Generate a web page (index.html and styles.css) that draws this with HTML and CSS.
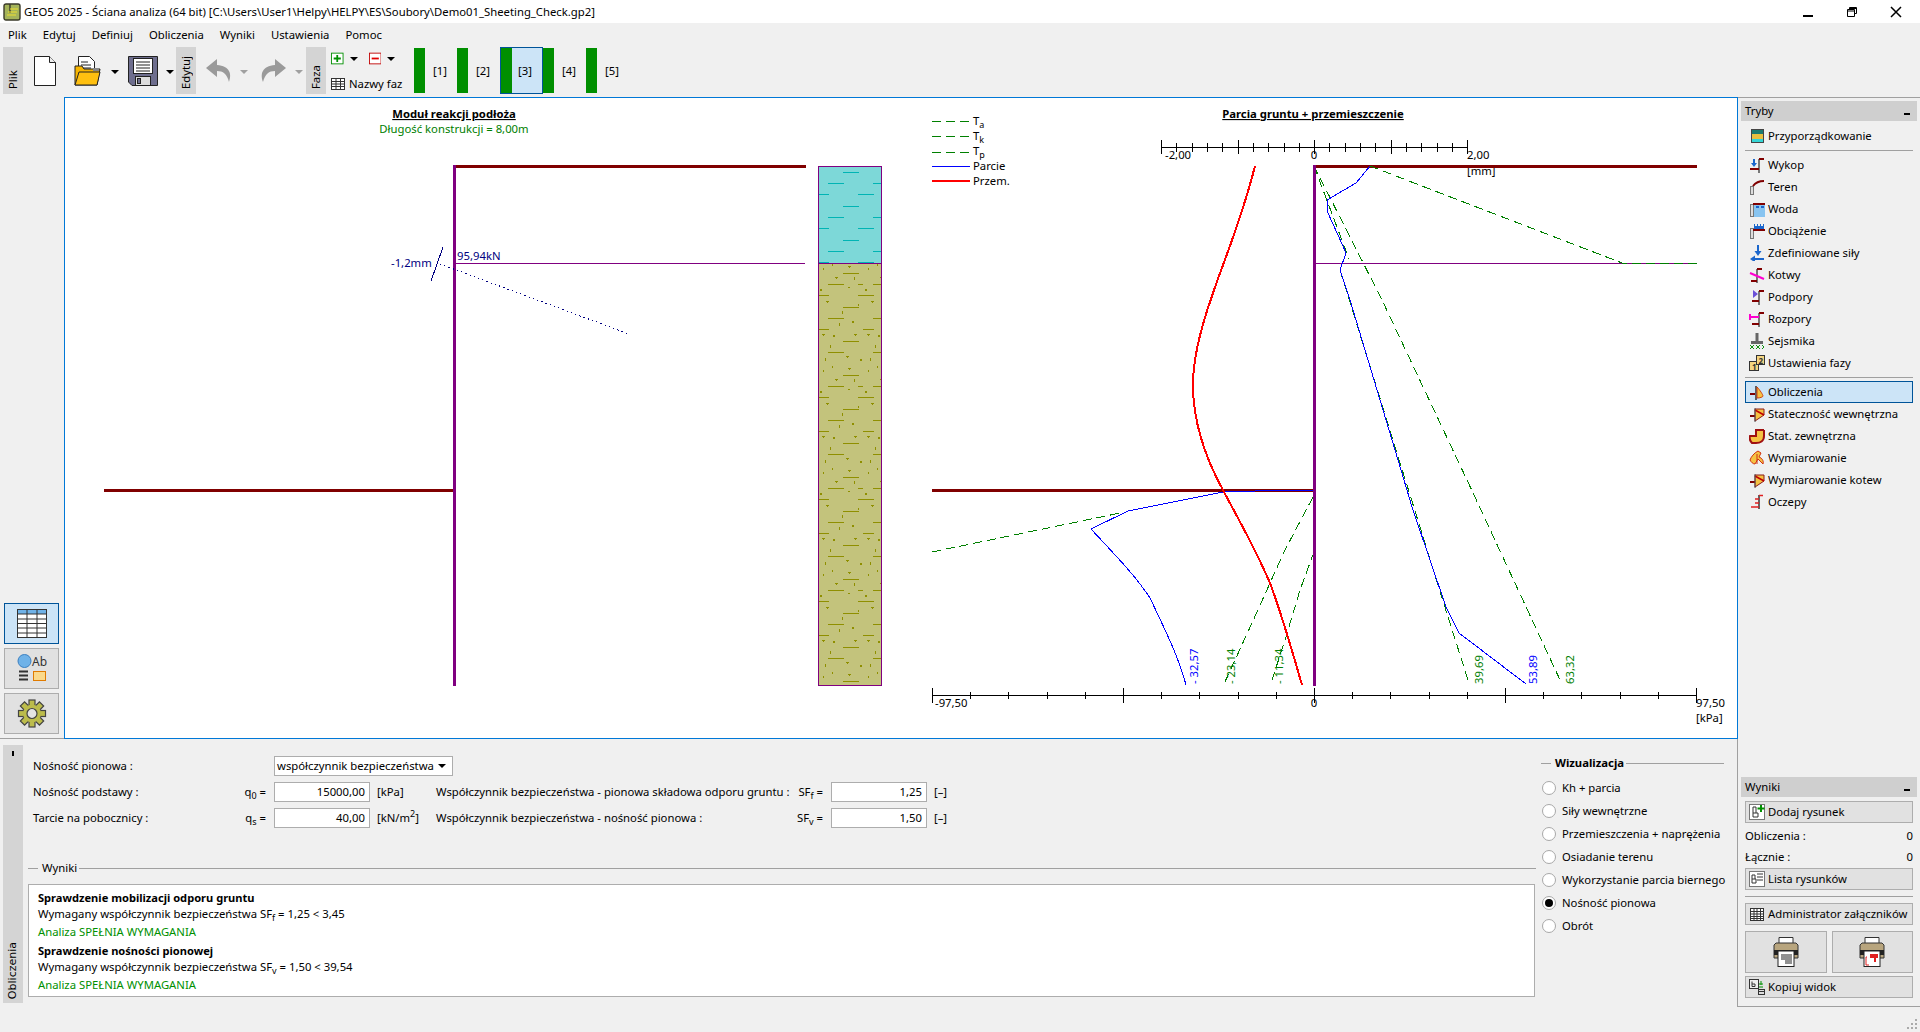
FILE: index.html
```html
<!DOCTYPE html>
<html lang="pl">
<head>
<meta charset="utf-8">
<title>GEO5 2025</title>
<link rel="stylesheet" href="styles.css">
</head>
<body>
<svg class="defs" width="0" height="0" aria-hidden="true">
  <defs>
    <pattern id="water" patternUnits="userSpaceOnUse" x="818" y="172" width="45" height="102">
      <rect width="45" height="102" fill="#7dd8d8"/>
      <g fill="#00b4b4">
        <rect x="25" y="0" width="16" height="1"/>
        <rect x="10" y="11" width="16" height="1"/>
        <rect x="0" y="22" width="11" height="1"/>
        <rect x="40" y="22" width="5" height="1"/>
        <rect x="25" y="34" width="16" height="1"/>
        <rect x="10" y="45" width="16" height="1"/>
        <rect x="0" y="56" width="11" height="1"/>
        <rect x="40" y="56" width="5" height="1"/>
        <rect x="25" y="68" width="16" height="1"/>
        <rect x="10" y="79" width="16" height="1"/>
        <rect x="0" y="90" width="11" height="1"/>
        <rect x="40" y="90" width="5" height="1"/>
      </g>
    </pattern>
    <pattern id="soil" patternUnits="userSpaceOnUse" x="818" y="263" width="45" height="102">
      <rect width="45" height="102" fill="#c3c37c"/>
      <g fill="#8f8f00">
        <rect x="25" y="10" width="16" height="1"/>
        <rect x="10" y="21" width="16" height="1"/>
        <rect x="40" y="21" width="5" height="1"/>
        <rect x="0" y="32" width="11" height="1"/>
        <rect x="40" y="32" width="5" height="1"/>
        <rect x="25" y="44" width="16" height="1"/>
        <rect x="10" y="55" width="16" height="1"/>
        <rect x="0" y="66" width="11" height="1"/>
        <rect x="25" y="78" width="16" height="1"/>
        <rect x="10" y="89" width="16" height="1"/>
        <rect x="30" y="3" width="3" height="1"/><rect x="31" y="4" width="1" height="1"/>
        <rect x="17" y="14" width="3" height="1"/><rect x="18" y="15" width="1" height="1"/>
        <rect x="5" y="5" width="1" height="2"/><rect x="14" y="1" width="1" height="2"/>
        <rect x="36" y="14" width="1" height="3"/>
        <rect x="8" y="38" width="3" height="1"/><rect x="9" y="39" width="1" height="1"/>
        <rect x="24" y="48" width="1" height="3"/><rect x="40" y="41" width="1" height="2"/>
        <rect x="21" y="60" width="1" height="3"/><rect x="4" y="71" width="3" height="1"/><rect x="5" y="72" width="1" height="1"/>
        <rect x="36" y="71" width="3" height="1"/><rect x="37" y="72" width="1" height="1"/>
        <rect x="12" y="82" width="1" height="3"/><rect x="28" y="93" width="3" height="1"/><rect x="29" y="94" width="1" height="1"/>
        <rect x="30" y="24" width="2" height="1"/><rect x="2" y="26" width="2" height="2"/><rect x="34" y="58" width="2" height="2"/>
        <rect x="15" y="72" width="2" height="2"/><rect x="42" y="96" width="2" height="2"/><rect x="7" y="95" width="1" height="3"/>
      </g>
    </pattern>
    <symbol id="i-stat" viewBox="0 0 16 16">
      <path d="M6 3h9v6l-9 6z" fill="#f5c242" stroke="#8b1a1a"/>
      <path d="M6 4l9 5" stroke="#c00000" stroke-width="1.5"/>
      <path d="M1 10h5" stroke="#800000" stroke-width="2"/>
      <path d="M6 2v14" stroke="#555"/>
    </symbol>
  </defs>
</svg>

<div class="app">
  <header class="titlebar">
    <svg class="app-logo" viewBox="0 0 18 18">
      <rect x="1" y="1" width="16" height="16" rx="2" fill="#a5b45a" stroke="#3a3a2a" stroke-width="1.4"/>
      <path d="M7 1v9" stroke="#3a3a2a" stroke-width="1.4"/>
      <path d="M7 6h8M5 9h9M4 12h9" stroke="#f0e030"/>
    </svg>
    <span class="title-text">GEO5 2025 - Ściana analiza (64 bit) [C:\Users\User1\Helpy\HELPY\ES\Soubory\Demo01_Sheeting_Check.gp2]</span>
    <div class="winbtns">
      <svg viewBox="0 0 12 12"><rect x="1" y="9" width="10" height="2" fill="#000"/></svg>
      <svg viewBox="0 0 12 12"><path d="M3.5 3.5V1.500h7v6h-2M1.500 3.500h7v7h-7z M1.500 5h7 M3.500 2.500h7" fill="none" stroke="#000"/></svg>
      <svg viewBox="0 0 12 12"><path d="M1 1l10 10M11 1L1 11" stroke="#000" stroke-width="1.5"/></svg>
    </div>
  </header>

  <nav class="menubar">
    <span>Plik</span><span>Edytuj</span><span>Definiuj</span><span>Obliczenia</span><span>Wyniki</span><span>Ustawienia</span><span>Pomoc</span>
  </nav>

  <div class="toolbar">
    <div class="vtab vtab-plik"><span>Plik</span></div>
    <svg class="tb-new" viewBox="0 0 22 30"><path d="M.5.5h15l6 6v23H.5z" fill="#fff" stroke="#222"/><path d="M15.500.5v6h6" fill="#eee" stroke="#222"/></svg>
    <svg class="tb-open" viewBox="0 0 27 30">
      <path d="M4.500.5h11l5 5v12h-16z" fill="#fff" stroke="#222"/>
      <path d="M7 6h7M7 9h10M7 12h10" stroke="#222"/>
      <path d="M1 10h7l2 3h16l-3 16H1z" fill="#f7b500" stroke="#222"/>
      <path d="M19 12h6v3h-6z" fill="#888"/>
      <path d="M1 29l4-13h21l-3 13z" fill="#ffc010" stroke="#222"/>
    </svg>
    <i class="tri tri-open"></i>
    <svg class="tb-save" viewBox="0 0 30 30">
      <path d="M.5.5h29v29H4l-3.500-3.500z" fill="#6e6e8e" stroke="#222"/>
      <rect x="5.500" y="2.500" width="19" height="15" fill="#fff" stroke="#222"/>
      <path d="M8 6h14M8 9h14M8 12h14M8 15h14" stroke="#222"/>
      <rect x="7.500" y="20.500" width="15" height="9" fill="#ddd" stroke="#222"/>
      <rect x="9.500" y="22.500" width="3" height="5" fill="#6e6e8e" stroke="#222"/>
    </svg>
    <i class="tri tri-save"></i>
    <div class="vtab vtab-edit"><span>Edytuj</span></div>
    <svg class="tb-undo" viewBox="0 0 28 26"><path d="M12 1L1 10l11 9v-6c6 0 10 3 12 11 3-8 1-16-12-17z" fill="#9a9a9a"/></svg>
    <i class="tri tri-off tri-undo"></i>
    <svg class="tb-redo" viewBox="0 0 28 26"><path d="M16 1l11 9-11 9v-6C10 13 6 16 4 24 1 16 3 8 16 7z" fill="#9a9a9a"/></svg>
    <i class="tri tri-off tri-redo"></i>
    <div class="vtab vtab-faza"><span>Faza</span></div>
    <div class="phase-tools">
      <div class="pt-row">
        <svg class="pt-box" viewBox="0 0 14 13"><rect x=".5" y=".5" width="13" height="12" fill="#fff" stroke="#009000"/><path d="M7 2.500v8M3 6.500h8" stroke="#009000" stroke-width="2"/></svg>
        <i class="tri pt-tri"></i>
        <svg class="pt-box" viewBox="0 0 14 13"><rect x=".5" y=".5" width="13" height="12" fill="#fff" stroke="#c00000"/><path d="M3 6.500h8" stroke="#e00000" stroke-width="2"/></svg>
        <i class="tri pt-tri"></i>
      </div>
      <div class="pt-names">
        <svg class="pt-grid" viewBox="0 0 14 12"><rect x=".5" y=".5" width="13" height="11" fill="#fff" stroke="#333"/><path d="M.5 3.500h13M.5 6h13M.5 8.500h13M5 .5v11M9.500 .5v11" stroke="#333"/></svg>
        <span>Nazwy faz</span>
      </div>
    </div>
    <div class="phases">
      <div class="phase"><b></b><span>[1]</span></div>
      <div class="phase"><b></b><span>[2]</span></div>
      <div class="phase phase-on"><b></b><span>[3]</span></div>
      <div class="phase"><b></b><span>[4]</span></div>
      <div class="phase"><b></b><span>[5]</span></div>
    </div>
  </div>

  <div class="work">
    <div class="leftcol">
      <div class="upper">
        <div class="rail">
          <div class="railbtn railbtn-on">
            <svg viewBox="0 0 30 29"><rect x=".5" y=".5" width="29" height="28" fill="#fff" stroke="#333"/><rect x="1" y="1" width="28" height="4" fill="#6fb2e8"/><path d="M.5 5h29M.5 10h29M.5 14.500h29M.5 19h29M.5 24h29M10 .5v28M20 .5v28" stroke="#333"/></svg>
          </div>
          <div class="railbtn">
            <svg viewBox="0 0 30 29">
              <circle cx="7.500" cy="7" r="6.500" fill="#6fb2e8" stroke="#3a7fc0"/>
              <text x="15" y="12" class="ab">Ab</text>
              <path d="M2 17.500h9M2 21.500h9M2 25.500h9" stroke="#333" stroke-width="2"/>
              <rect x="16.500" y="17.500" width="12" height="9" fill="#fbd98a" stroke="#e07b00"/>
            </svg>
          </div>
          <div class="railbtn">
            <svg viewBox="0 0 30 29">
              <g fill="#bcbc4c" stroke="#444" stroke-width="1.200">
                <rect x="12" y="1" width="6" height="6" transform="rotate(0 15 14.500)"/>
                <rect x="12" y="1" width="6" height="6" transform="rotate(45 15 14.500)"/>
                <rect x="12" y="1" width="6" height="6" transform="rotate(90 15 14.500)"/>
                <rect x="12" y="1" width="6" height="6" transform="rotate(135 15 14.500)"/>
                <rect x="12" y="1" width="6" height="6" transform="rotate(180 15 14.500)"/>
                <rect x="12" y="1" width="6" height="6" transform="rotate(225 15 14.500)"/>
                <rect x="12" y="1" width="6" height="6" transform="rotate(270 15 14.500)"/>
                <rect x="12" y="1" width="6" height="6" transform="rotate(315 15 14.500)"/>
              </g>
              <circle cx="15" cy="14.500" r="9" fill="#bcbc4c"/>
              <circle cx="15" cy="14.500" r="5" fill="#e4e4e4" stroke="#444" stroke-width="1.200"/>
            </svg>
          </div>
        </div>
        <div class="canvas">
          <svg class="chart" width="1672" height="640" viewBox="65 98 1672 640">
            <!-- left diagram -->
            <text class="t-b" x="454" y="118" text-anchor="middle">Moduł reakcji podłoża</text>
            <text class="t t-green" x="454" y="133" text-anchor="middle">Długość konstrukcji = 8,00m</text>
            <path d="M454 166H806" stroke="#800000" stroke-width="3"/>
            <path d="M104 490H454" stroke="#800000" stroke-width="3"/>
            <path d="M455 263.500H805" stroke="#800080"/>
            <path d="M454.500 165V686" stroke="#800080" stroke-width="3"/>
            <text class="t t-navy" x="457" y="260">95,94kN</text>
            <text class="t t-navy" x="391" y="267">-1,2mm</text>
            <path d="M443 247L431 281" stroke="#000080"/>
            <path d="M440 264L629 334" stroke="#000080" stroke-dasharray="1.500 3"/>
            <rect x="818.500" y="166.500" width="63" height="97" fill="url(#water)" stroke="#800080"/>
            <rect x="818.500" y="263.500" width="63" height="422" fill="url(#soil)" stroke="#800080"/>

            <!-- legend -->
            <g fill="none">
              <path d="M932 121.500H970M932 136.500H970M932 152.500H970" stroke="#008000" stroke-dasharray="9 5"/>
              <path d="M932 166.500H970" stroke="#0000ff"/>
              <path d="M932 181H970" stroke="#ff0000" stroke-width="2"/>
            </g>
            <text class="t" x="973" y="125">T<tspan class="sub" dy="3">a</tspan></text>
            <text class="t" x="973" y="140">T<tspan class="sub" dy="3">k</tspan></text>
            <text class="t" x="973" y="155">T<tspan class="sub" dy="3">p</tspan></text>
            <text class="t" x="973" y="170">Parcie</text>
            <text class="t" x="973" y="185">Przem.</text>

            <text class="t-b" x="1313" y="118" text-anchor="middle">Parcia gruntu + przemieszczenie</text>

            <!-- top axis -->
            <path d="M1161 147.500H1467M1161.500 140V154M1176.500 143V152M1192.500 143V152M1207.500 143V152M1222.500 143V152M1238.500 140V154M1253.500 143V152M1268.500 143V152M1284.500 143V152M1299.500 143V152M1314.500 140V154M1329.500 143V152M1345.500 143V152M1360.500 143V152M1375.500 143V152M1391.500 140V154M1406.500 143V152M1421.500 143V152M1437.500 143V152M1452.500 143V152M1467.500 140V154" stroke="#000" fill="none"/>
            <text class="t" x="1165" y="159">-2,00</text>
            <text class="t" x="1314" y="159" text-anchor="middle">0</text>
            <text class="t" x="1467" y="159">2,00</text>
            <text class="t" x="1467" y="175">[mm]</text>

            <!-- bottom axis -->
            <path d="M932 695.500H1697M932.500 688V703M970.500 692V699M1008.500 692V699M1047.500 692V699M1085.500 692V699M1123.500 688V703M1161.500 692V699M1199.500 692V699M1238.500 692V699M1276.500 692V699M1314.500 688V703M1352.500 692V699M1390.500 692V699M1429.500 692V699M1467.500 692V699M1505.500 688V703M1543.500 692V699M1581.500 692V699M1620.500 692V699M1658.500 692V699M1696.500 688V703" stroke="#000" fill="none"/>
            <text class="t" x="935" y="707">-97,50</text>
            <text class="t" x="1314" y="707" text-anchor="middle">0</text>
            <text class="t" x="1696" y="707">97,50</text>
            <text class="t" x="1696" y="722">[kPa]</text>

            <!-- chart structure -->
            <path d="M1314 166H1697" stroke="#800000" stroke-width="3"/>
            <path d="M932 490H1314" stroke="#800000" stroke-width="3"/>
            <path d="M1314 263.500H1697" stroke="#800080"/>

            <!-- green dashed -->
            <g fill="none" stroke="#008000" stroke-dasharray="9 5">
              <path d="M1370 166L1622 263L1697 263"/>
              <path d="M1314 166L1349 259"/>
              <path d="M1340 270L1448 617L1468 680"/>
              <path d="M1314 166L1382 300L1467 480L1561 682"/>
              <path d="M1314 490H1280"/>
              <path d="M932 552L1125 512"/>
              <path d="M1313 497L1285 550L1270 583L1252 623L1224 684"/>
              <path d="M1314 552L1300 590L1285 640L1271 683"/>
            </g>

            <!-- blue -->
            <g fill="none" stroke="#0000ff">
              <path d="M1370 166L1356 183L1327 200L1328 213L1338 235L1346 253L1340 270L1350 300L1404 480L1412 507L1430 560L1446 607L1459 633L1526 684"/>
              <path d="M1314 490L1226 491.500L1128 511L1091 529C1115 555 1135 575 1150 598C1165 630 1178 655 1186 685"/>
            </g>

            <!-- red -->
            <path d="M1255 166C1240 225 1222 265 1212 296C1200 330 1193 360 1193 385C1193 425 1208 463 1224 492C1240 522 1255 548 1270 583C1282 615 1292 650 1302 685" fill="none" stroke="#ff0000" stroke-width="2"/>

            <path d="M1314.500 165V686" stroke="#800080" stroke-width="3"/>

            <!-- rotated values -->
            <text class="t t-vb" transform="translate(1198 684) rotate(-90)">- 32,57</text>
            <text class="t t-vg" transform="translate(1235 684) rotate(-90)">- 23,14</text>
            <text class="t t-vg" transform="translate(1283 684) rotate(-90)">- 11,34</text>
            <text class="t t-vg" transform="translate(1483 684) rotate(-90)">39,69</text>
            <text class="t t-vb" transform="translate(1537 684) rotate(-90)">53,89</text>
            <text class="t t-vg" transform="translate(1574 684) rotate(-90)">63,32</text>
          </svg>
        </div>
      </div>

      <div class="lower">
        <div class="lowtab"><i></i><span>Obliczenia</span></div>
        <div class="lowmain">
          <div class="form">
            <span class="f-l">Nośność pionowa :</span><span></span>
            <div class="select"><span>współczynnik bezpieczeństwa</span><i class="tri"></i></div>

            <span class="f-l">Nośność podstawy :</span><span class="f-s">q<sub>0</sub> =</span>
            <div class="input">15000,00</div><span class="unit">[kPa]</span>
            <span>Współczynnik bezpieczeństwa - pionowa składowa odporu gruntu :</span><span class="f-s">SF<sub>f</sub> =</span>
            <div class="input">1,25</div><span class="unit">[–]</span>

            <span class="f-l">Tarcie na pobocznicy :</span><span class="f-s">q<sub>s</sub> =</span>
            <div class="input">40,00</div><span class="unit">[kN/m<sup>2</sup>]</span>
            <span>Współczynnik bezpieczeństwa - nośność pionowa :</span><span class="f-s">SF<sub>v</sub> =</span>
            <div class="input">1,50</div><span class="unit">[–]</span>
          </div>
          <div class="legend legend-wyniki"><span>Wyniki</span></div>
          <div class="results">
            <div class="r-b">Sprawdzenie mobilizacji odporu gruntu</div>
            <div>Wymagany współczynnik bezpieczeństwa SF<sub>f</sub> = 1,25 &lt; 3,45</div>
            <div class="r-g">Analiza SPEŁNIA WYMAGANIA</div>
            <div class="r-b r-next">Sprawdzenie nośności pionowej</div>
            <div>Wymagany współczynnik bezpieczeństwa SF<sub>v</sub> = 1,50 &lt; 39,54</div>
            <div class="r-g">Analiza SPEŁNIA WYMAGANIA</div>
          </div>
        </div>
        <div class="viz">
          <div class="legend legend-viz"><span>Wizualizacja</span></div>
          <div class="radios">
            <label><i></i>Kh + parcia</label>
            <label><i></i>Siły wewnętrzne</label>
            <label><i></i>Przemieszczenia + naprężenia</label>
            <label><i></i>Osiadanie terenu</label>
            <label><i></i>Wykorzystanie parcia biernego</label>
            <label><i class="on"></i>Nośność pionowa</label>
            <label><i></i>Obrót</label>
          </div>
        </div>
      </div>
    </div>

    <aside class="right">
      <div class="phead"><span>Tryby</span><i></i></div>
      <ul class="modes">
        <li>
          <svg viewBox="0 0 16 16"><rect x="2" y="1" width="13" height="5" fill="#1b7a70"/><rect x="2" y="6" width="13" height="5" fill="#e8c040"/><rect x="2" y="11" width="13" height="4" fill="#35d5d5"/><rect x="2.500" y="1.500" width="12" height="13" fill="none" stroke="#444"/></svg>
          Przyporządkowanie</li>
        <li class="sep"></li>
        <li><svg viewBox="0 0 16 16"><path d="M10 2v14" stroke="#777" stroke-width="2"/><path d="M10 2h5M1 12h9" stroke="#800000" stroke-width="2"/><path d="M5 2v6" stroke="#1a66cc" stroke-width="2"/><path d="M2 6h6l-3 4z" fill="#1a66cc"/></svg>Wykop</li>
        <li><svg viewBox="0 0 16 16"><rect x="1.500" y="7.500" width="3" height="8" fill="#ddd" stroke="#777"/><path d="M4 7c3-4 6-5 11-5" fill="none" stroke="#800000" stroke-width="2"/></svg>Teren</li>
        <li><svg viewBox="0 0 16 16"><rect x="5" y="4" width="11" height="12" fill="#88c4f0"/><rect x="1.500" y="3.500" width="3" height="12" fill="#ddd" stroke="#777"/><path d="M4 3h12" stroke="#800000" stroke-width="2"/><path d="M7 6h3M12 6h3" stroke="#1a66cc" stroke-width="2"/></svg>Woda</li>
        <li><svg viewBox="0 0 16 16"><rect x="1.500" y="5.500" width="3" height="10" fill="#ddd" stroke="#777"/><path d="M4 7h12" stroke="#800000" stroke-width="2"/><path d="M5 3h10v3H5z M5 1h1v2H5z M8 1h1v2H8z M11 1h1v2h-1z M14 1h1v2h-1z" fill="#1a66cc"/></svg>Obciążenie</li>
        <li><svg viewBox="0 0 16 16"><path d="M9 0v7" stroke="#1a66cc" stroke-width="2"/><path d="M5.500 6h7L9 11z" fill="#1a66cc"/><path d="M4 14h11" stroke="#1a66cc" stroke-width="2"/><path d="M6 10.500v7L1 14z" fill="#1a66cc"/></svg>Zdefiniowane siły</li>
        <li><svg viewBox="0 0 16 16"><path d="M8 2v14" stroke="#777" stroke-width="2"/><path d="M8 2h5M2 14h6" stroke="#800000" stroke-width="2"/><path d="M1 6l14 6" stroke="#ff00d0" stroke-width="2"/></svg>Kotwy</li>
        <li><svg viewBox="0 0 16 16"><path d="M10 2v14" stroke="#777" stroke-width="2"/><path d="M10 2h5M3 12h7" stroke="#800000" stroke-width="2"/><path d="M4 1v8l5-4z" fill="#6a50d8"/></svg>Podpory</li>
        <li><svg viewBox="0 0 16 16"><path d="M10 2v14" stroke="#777" stroke-width="2"/><path d="M10 2h5M3 13h7" stroke="#800000" stroke-width="2"/><path d="M1 6h9M1 3v6" stroke="#ff00d0" stroke-width="2"/></svg>Rozpory</li>
        <li><svg viewBox="0 0 16 16"><path d="M8 0v8" stroke="#666" stroke-width="3"/><path d="M2 8h12v3H2z" fill="#666"/><path d="M1 12l2 2-2 2M5 12l-2 2 2 2M7 12l2 2-2 2M11 12l-2 2 2 2M13 12l2 2-2 2" fill="none" stroke="#109010"/></svg>Sejsmika</li>
        <li><svg viewBox="0 0 16 16"><rect x=".5" y="6.500" width="9" height="9" fill="#f5d580" stroke="#333"/><rect x="7.500" y=".5" width="8" height="9" fill="#f5d580" stroke="#333"/><text x="3" y="14.500" class="num">1</text><text x="9.500" y="8.500" class="num">2</text></svg>Ustawienia fazy</li>
        <li class="sep"></li>
        <li class="active"><svg viewBox="0 0 16 16"><path d="M1 10h5" stroke="#800000" stroke-width="2"/><path d="M7 2v14" stroke="#333" stroke-width="1.500"/><path d="M8 3c3 3 6 8 6 9s-3 2-6 2z" fill="#f5c242" stroke="#d04010"/></svg>Obliczenia</li>
        <li><svg viewBox="0 0 16 16"><use href="#i-stat"/></svg>Stateczność wewnętrzna</li>
        <li><svg viewBox="0 0 16 16"><path d="M7 2h8v6c0 5-4 7-8 7H3C1 13 0 11 1 8h6z" fill="#f5c242"/><path d="M15 2v6c0 5-4 7-8 7H3C1 13 0 11 1 8h6V2h8" fill="none" stroke="#a01010" stroke-width="2"/></svg>Stat. zewnętrzna</li>
        <li><svg viewBox="0 0 16 16"><path d="M9 1c-4 2-7 6-8 9 1 2 3 4 5 4l3-5 5 5c1-3-1-6-4-7l2-4z" fill="#f5c242" stroke="#d03010"/><path d="M8 4v10" stroke="#d03010"/></svg>Wymiarowanie</li>
        <li><svg viewBox="0 0 16 16"><use href="#i-stat"/></svg>Wymiarowanie kotew</li>
        <li><svg viewBox="0 0 16 16"><path d="M10 1v14" stroke="#333" stroke-width="1.500"/><path d="M10 1.500h4M6 5h4M6 9h4M2 13h8" stroke="#e02020" stroke-width="1.500"/></svg>Oczepy</li>
      </ul>

      <div class="res">
        <div class="phead"><span>Wyniki</span><i></i></div>
        <div class="rbtn rbtn-first"><svg viewBox="0 0 16 16"><rect x=".5" y=".5" width="15" height="15" fill="#fff" stroke="#777"/><path d="M4 3v10h5v-4H4M4 3h3v6" fill="none" stroke="#333"/><path d="M12 1v7M8.500 4.500h7" stroke="#009000" stroke-width="2"/></svg>Dodaj rysunek</div>
        <div class="count"><span>Obliczenia :</span><span>0</span></div>
        <div class="count"><span>Łącznie :</span><span>0</span></div>
        <div class="rbtn"><svg viewBox="0 0 16 16"><rect x=".5" y=".5" width="15" height="15" fill="#fff" stroke="#777"/><path d="M3 4v8h4V8H3M3 4h3v4" fill="none" stroke="#333"/><path d="M8 3h6M8 6h6M8 9h6" stroke="#333"/></svg>Lista rysunków</div>
        <div class="rsep"></div>
        <div class="rbtn"><svg viewBox="0 0 16 16"><rect x="1.500" y="2.500" width="13" height="12" fill="#fff" stroke="#333"/><path d="M1.500 5.500h13M1.500 8h13M1.500 10.500h13M1.500 12.500h13M5 2.500v12M8 2.500v12M11.500 2.500v12" stroke="#333"/></svg>Administrator załączników</div>
        <div class="printrow">
          <div class="printbtn"><svg viewBox="0 0 26 30"><path d="M6 .5h14v8H6z" fill="#fff" stroke="#333"/><path d="M3 6h20l2 2v13H1V8z" fill="#b8a57e" stroke="#333"/><rect x="1" y="13" width="24" height="5" fill="#222"/><rect x="5" y="14" width="16" height="15.500" fill="#fff" stroke="#222"/><path d="M8 18h11M8 20h11M8 22h11M12 24h7M12 26h7" stroke="#222"/></svg></div>
          <div class="printbtn"><svg viewBox="0 0 26 30"><path d="M6 .5h14v8H6z" fill="#fff" stroke="#333"/><path d="M3 6h20l2 2v13H1V8z" fill="#b8a57e" stroke="#333"/><rect x="1" y="13" width="24" height="5" fill="#222"/><rect x="5" y="14" width="16" height="15.500" fill="#fff" stroke="#222"/><path d="M11 17h8v4h-2v4h-2v-4h-4z" fill="#e02020"/><path d="M8 20H7v8h3" fill="none" stroke="#e02020"/></svg></div>
        </div>
        <div class="rbtn"><svg viewBox="0 0 16 16"><rect x=".5" y=".5" width="9" height="9" fill="#eee" stroke="#333"/><path d="M3 2.500v5h3V5H3" fill="none" stroke="#333"/><path d="M12 2v4" stroke="#009000"/><path d="M10 5h4M10 8h4" stroke="#009000"/><rect x="9.500" y="10.500" width="6" height="5" fill="#ddd" stroke="#333"/><path d="M9.500 12.500h6" stroke="#333"/></svg>Kopiuj widok</div>
      </div>
    </aside>
  </div>
  <svg class="grip" viewBox="0 0 12 12"><path d="M9 1h2v2H9zM5 5h2v2H5zM9 5h2v2H9zM1 9h2v2H1zM5 9h2v2H5zM9 9h2v2H9z" fill="#aaa"/></svg>
</div>
</body>
</html>
```

FILE: styles.css
```css
* { box-sizing: border-box; }
html, body { margin: 0; padding: 0; }
body {
  width: 1920px;
  height: 1032px;
  overflow: hidden;
  background: #f0f0f0;
  font: 11.3px/16px "Noto Sans", Tahoma, sans-serif;
  color: #000;
}
.defs { position: absolute; }
.app { position: relative; width: 1920px; height: 1032px; display: flex; flex-direction: column; }

/* title */
.titlebar { height: 23px; background: #fff; display: flex; align-items: center; padding-left: 3px; }
.app-logo { width: 18px; height: 18px; margin-right: 3px; }
.title-text { flex: 1; white-space: nowrap; }
.winbtns { display: flex; gap: 32px; padding-right: 18px; }
.winbtns svg { width: 12px; height: 12px; display: block; }

/* menu */
.menubar { height: 24px; display: flex; align-items: center; gap: 16px; padding-left: 8px; }

/* toolbar */
.toolbar { height: 50px; position: relative; }
.vtab {
  position: absolute; top: 0; width: 20px; height: 47px; background: #d4d4d4;
  display: flex; align-items: flex-start; justify-content: center;
}
.vtab span { writing-mode: vertical-rl; transform: rotate(180deg); line-height: 20px; height: 42px; }
.vtab-plik { left: 3px; }
.vtab-edit { left: 176px; }
.vtab-faza { left: 306px; }
.toolbar > svg { position: absolute; }
.tb-new { left: 34px; top: 9px; width: 22px; height: 30px; }
.tb-open { left: 74px; top: 9px; width: 27px; height: 30px; }
.tb-save { left: 128px; top: 9px; width: 30px; height: 30px; }
.tb-undo { left: 205px; top: 11px; width: 28px; height: 26px; }
.tb-redo { left: 259px; top: 11px; width: 28px; height: 26px; }
.tri { display: inline-block; width: 0; height: 0; border-left: 4px solid transparent; border-right: 4px solid transparent; border-top: 4px solid #000; }
.toolbar > .tri { position: absolute; top: 23px; }
.tri-open { left: 111px; }
.tri-save { left: 166px; }
.tri-undo { left: 240px; }
.tri-redo { left: 295px; }
.tri-off { border-top-color: #a0a0a0; }
.phase-tools { position: absolute; left: 331px; top: 5px; width: 75px; }
.pt-row { display: flex; align-items: center; height: 13px; }
.pt-box { width: 14px; height: 13px; display: block; }
.pt-tri { margin: 0 11px 0 6px; }
.pt-names { display: flex; align-items: center; gap: 4px; margin-top: 11px; white-space: nowrap; }
.pt-grid { width: 14px; height: 12px; flex: none; }
.phases { position: absolute; left: 414px; top: 0; display: flex; height: 47px; }
.phase { width: 43px; height: 47px; position: relative; display: flex; align-items: center; justify-content: flex-end; padding: 2px 1px 2px 0; }
.phase b { position: absolute; left: 0; top: 1px; bottom: 1px; width: 11px; background: #008f00; }
.phase span { width: 32px; text-align: center; }
.phase-on { background: #cce4f7; border: 1px solid #005499; }
.phase-on b { top: 0; bottom: 0; }

/* workspace */
.work { flex: 1; display: flex; align-items: flex-start; min-height: 0; }
.leftcol { width: 1738px; }
.upper { height: 642px; display: flex; }
.rail {
  width: 64px; height: 642px; border-bottom: 1px solid #a0a0a0;
  display: flex; flex-direction: column; justify-content: flex-end; gap: 4px;
  padding: 0 5px 4px 4px;
}
.railbtn { width: 55px; height: 41px; background: #e1e1e1; border: 1px solid #adadad; display: flex; align-items: center; justify-content: center; }
.railbtn svg { width: 30px; height: 29px; }
.railbtn-on { background: #cce4f7; border-color: #005499; }
.ab { font: 12px "Noto Sans", sans-serif; fill: #333; }
.num { font: bold 8px "Noto Sans", sans-serif; fill: #333; }
.canvas { position: relative; z-index: 1; width: 1674px; height: 642px; background: #fff; border: 1px solid #0078d7; }
.chart { display: block; shape-rendering: crispEdges; }
.t { font: 11.3px "Noto Sans", sans-serif; fill: #000; }
.t-b { font: bold 11.3px "Noto Sans", sans-serif; fill: #000; text-decoration: underline; }
.t-green { fill: #008000; }
.t-navy { fill: #000080; }
.t-vb { fill: #0000ff; }
.t-vg { fill: #008000; }
.sub { font-size: 9px; }

/* lower */
.lower { height: 293px; display: flex; padding: 6px 0 0 3px; }
.lowtab { width: 20px; height: 258px; background: #d4d4d4; position: relative; flex: none; }
.lowtab i { position: absolute; left: 9px; top: 6px; width: 2px; height: 5px; background: #000; }
.lowtab span { position: absolute; bottom: 4px; left: 0; width: 20px; writing-mode: vertical-rl; transform: rotate(180deg); line-height: 20px; font-family: "DejaVu Sans", sans-serif; font-size: 11px; }
.lowmain { width: 1508px; margin-left: 5px; padding-top: 11px; flex: none; }
.form {
  display: grid; padding-left: 5px; row-gap: 6px; align-items: center;
  grid-template-columns: 211px 22px 104px 66px 361px 26px 104px 30px;
  grid-auto-rows: 20px;
}
.form > * { white-space: nowrap; }
.f-s { text-align: right; }
.input { margin-left: 8px; height: 20px; background: #fff; border: 1px solid #adadad; text-align: right; padding-right: 4px; line-height: 18px; }
.unit { padding-left: 7px; }
.select { grid-column: 3 / -1; margin-left: 8px; justify-self: start; width: 179px; height: 20px; background: #fff; border: 1px solid #adadad; display: flex; align-items: center; justify-content: space-between; padding: 0 6px 0 2px; line-height: 18px; }
sub, sup { line-height: 0; font-size: 9px; }
.legend { display: flex; align-items: center; height: 16px; white-space: nowrap; }
.legend::before { content: ""; width: 10px; height: 1px; background: #a0a0a0; margin-right: 4px; flex: none; }
.legend::after { content: ""; flex: 1; height: 1px; background: #a0a0a0; margin-left: 2px; }
.legend-wyniki { margin-top: 32px; }
.results { width: 1507px; height: 113px; margin-top: 8px; background: #fff; border: 1px solid #adadad; padding: 5px 0 0 9px; line-height: 16px; }
.r-b { font-weight: 700; font-size: 11.1px; }
.r-g { color: #009000; margin-top: 2px; }
.r-next { margin-top: 3px; }
.viz { width: 183px; margin-left: 5px; padding-top: 10px; flex: none; }
.legend-viz { font-weight: 700; }
.radios { margin-top: 5px; display: flex; flex-direction: column; }
.radios label { height: 23px; display: flex; align-items: center; gap: 6px; padding-left: 1px; white-space: nowrap; }
.radios i { width: 14px; height: 14px; border-radius: 50%; background: #fff; border: 1px solid #a8a8a8; flex: none; position: relative; }
.radios i.on::after { content: ""; position: absolute; left: 2px; top: 2px; width: 8px; height: 8px; border-radius: 50%; background: #000; }

/* right panel */
.right { width: 183px; margin-left: -1px; height: 910px; border: 1px solid #a0a0a0; border-right: 0; padding: 3px 3px 8px 3px; display: flex; flex-direction: column; }
.phead { height: 20px; background: #cfcfcf; display: flex; align-items: center; justify-content: space-between; padding: 0 7px 0 4px; flex: none; }
.phead i { width: 6px; height: 2px; background: #000; margin-top: 5px; }
.modes { list-style: none; margin: 4px 4px 0; padding: 0; }
.modes li { height: 22px; display: flex; align-items: center; gap: 3px; padding-left: 3px; white-space: nowrap; border: 1px solid transparent; }
.modes li svg { width: 16px; height: 16px; flex: none; }
.modes li.sep { height: 1px; padding: 0; border: 0; background: #a0a0a0; margin: 3px 0; }
.modes li.active { background: #cce4f7; border-color: #005499; }
.res { margin-top: auto; }
.rbtn { height: 22px; margin: 4px 4px 0; background: #e1e1e1; border: 1px solid #adadad; display: flex; align-items: center; gap: 3px; padding-left: 3px; white-space: nowrap; }
.rbtn svg { width: 16px; height: 16px; flex: none; }
.count { height: 21px; margin: 0 4px; display: flex; align-items: center; justify-content: space-between; }
.rbtn-first + .count { margin-top: 2px; }
.count + .rbtn { margin-top: 1px; }
.rsep { height: 1px; background: #a0a0a0; margin: 6px 4px; }
.rsep + .rbtn { margin-top: 0; }
.printrow { display: flex; gap: 5px; margin: 6px 4px 0; }
.printbtn { flex: 1; height: 42px; background: #e1e1e1; border: 1px solid #adadad; display: flex; align-items: center; justify-content: center; }
.printbtn svg { width: 26px; height: 30px; }
.printrow + .rbtn { margin-top: 3px; }
.grip { position: absolute; right: 2px; bottom: 2px; width: 12px; height: 12px; }
```
